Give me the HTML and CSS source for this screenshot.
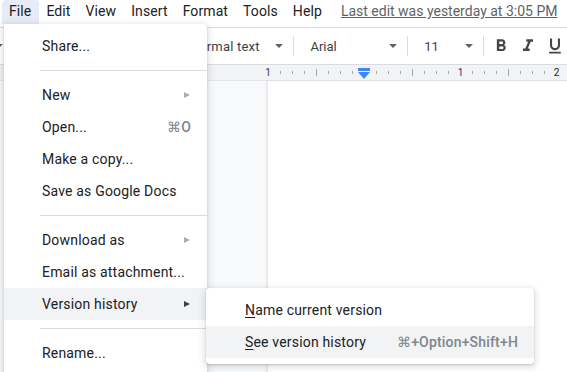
FILE: index.html
```html
<!DOCTYPE html>
<html>
<head>
<meta charset="utf-8">
<link rel="stylesheet" href="styles.css">
</head>
<body>
<div class="app">
  <div class="menubar">
    <span class="mb-item active">File</span>
    <span class="mb-item">Edit</span>
    <span class="mb-item">View</span>
    <span class="mb-item">Insert</span>
    <span class="mb-item">Format</span>
    <span class="mb-item">Tools</span>
    <span class="mb-item">Help</span>
    <span class="last-edit">Last edit was yesterday at 3:05 PM</span>
  </div>
  <div class="toolbar">
    <div class="tb-left"><i class="caret"></i></div>
    <div class="dd dd-style"><span>Normal text</span><i class="caret"></i></div>
    <div class="sep"></div>
    <div class="dd dd-font"><span>Arial</span><i class="caret"></i></div>
    <div class="sep"></div>
    <div class="dd dd-size"><span>11</span><i class="caret"></i></div>
    <div class="sep"></div>
    <div class="icon-btn"><svg viewBox="0 0 24 24" width="20" height="20"><path d="M15.6 10.79c.97-.67 1.650-1.77 1.65-2.79 0-2.26-1.75-4-4-4H7v14h7.04c2.09 0 3.71-1.7 3.71-3.79 0-1.52-.86-2.82-2.15-3.42zM10 6.5h3c.83 0 1.5.67 1.5 1.5s-.67 1.5-1.5 1.5h-3v-3zm3.5 9H10v-3h3.5c.83 0 1.5.67 1.5 1.5s-.67 1.5-1.5 1.5z"/></svg></div>
    <div class="icon-btn"><svg viewBox="0 0 24 24" width="20" height="20"><path d="M10 4v3h2.21l-3.420 8H6v3h8v-3h-2.21l3.42-8H18V4z"/></svg></div>
    <div class="icon-btn"><svg viewBox="0 0 24 24" width="20" height="20"><path d="M12 17c3.31 0 6-2.690 6-6V3h-2.5v8c0 1.93-1.57 3.5-3.5 3.5S8.5 12.93 8.5 11V3H6v8c0 3.31 2.69 6 6 6zm-7 2v2h14v-2H5z"/></svg></div>
  </div>
  <div class="ruler">
    <svg class="ruler-svg" width="567" height="15" viewBox="0 0 567 15">
      <g class="ticks">
        <rect x="280" y="6" width="1" height="3"/><rect x="292" y="6" width="1" height="3"/><rect x="304" y="6" width="1" height="3"/>
        <rect x="316" y="4" width="1" height="7"/>
        <rect x="328" y="6" width="1" height="3"/><rect x="340" y="6" width="1" height="3"/><rect x="352" y="6" width="1" height="3"/>
        <rect x="376" y="6" width="1" height="3"/><rect x="388" y="6" width="1" height="3"/><rect x="400" y="6" width="1" height="3"/>
        <rect x="412" y="4" width="1" height="7"/>
        <rect x="424" y="6" width="1" height="3"/><rect x="436" y="6" width="1" height="3"/><rect x="448" y="6" width="1" height="3"/>
        <rect x="472" y="6" width="1" height="3"/><rect x="484" y="6" width="1" height="3"/><rect x="496" y="6" width="1" height="3"/>
        <rect x="508" y="4" width="1" height="7"/>
        <rect x="520" y="6" width="1" height="3"/><rect x="532" y="6" width="1" height="3"/><rect x="544" y="6" width="1" height="3"/>
      </g>
      <g class="nums">
        <text x="268" y="11" class="num purple">1</text>
        <text x="460.5" y="11" class="num purple">1</text>
        <text x="556.5" y="11" class="num">2</text>
      </g>
      <g class="marker">
        <rect x="358" y="3" width="12" height="3"/>
        <polygon points="358,7 370,7 364,14"/>
      </g>
    </svg>
  </div>
  <div class="workspace">
    <div class="gutter"></div>
    <div class="page"></div>
  </div>

  <div class="menu file-menu">
    <div class="mi">Share...</div>
    <div class="divider"></div>
    <div class="mi">New<span class="arrow"></span></div>
    <div class="mi">Open...<span class="sc">⌘O</span></div>
    <div class="mi">Make a copy...</div>
    <div class="mi">Save as Google Docs</div>
    <div class="divider"></div>
    <div class="mi">Download as<span class="arrow"></span></div>
    <div class="mi">Email as attachment...</div>
    <div class="mi hl">Version history<span class="arrow dark"></span></div>
    <div class="divider"></div>
    <div class="mi">Rename...</div>
  </div>

  <div class="menu submenu">
    <div class="mi sub"><span><u>N</u>ame current version</span></div>
    <div class="mi sub hl"><span><u>S</u>ee version history</span><span class="sc">⌘+Option+Shift+H</span></div>
  </div>
</div>
</body>
</html>
```

FILE: styles.css
```css
* { box-sizing: border-box; }
html, body { margin: 0; padding: 0; }
body {
  width: 567px;
  height: 372px;
  overflow: hidden;
  font-family: Roboto, "Liberation Sans", Arial, sans-serif;
  color: #202124;
  background: #fff;
}
.app {
  position: relative;
  width: 567px;
  height: 372px;
  overflow: hidden;
  display: flex;
  flex-direction: column;
}

/* menubar */
.menubar {
  height: 28px;
  border-bottom: 1px solid #dadce0;
  display: flex;
  align-items: flex-start;
  padding-left: 2px;
  font-size: 14px;
  letter-spacing: 0.1px;
  flex-shrink: 0;
}
.mb-item {
  height: 24px;
  line-height: 23px;
  padding: 0 8px 0 7px;
  border-radius: 4px 4px 0 0;
  white-space: nowrap;
}
.mb-item.active { background: #e6ebf5; }
.last-edit {
  margin-left: 11px;
  line-height: 23px;
  color: #5f6368;
  text-decoration: underline;
  white-space: nowrap;
  letter-spacing: 0;
}

/* toolbar */
.toolbar {
  height: 37px;
  border-bottom: 1px solid #dadce0;
  display: flex;
  align-items: center;
  font-size: 13px;
  color: #3c4043;
  flex-shrink: 0;
}
.tb-left {
  width: 184px;
  display: flex;
  align-items: center;
}
.caret {
  display: inline-block;
  width: 0;
  height: 0;
  border-left: 4px solid transparent;
  border-right: 4px solid transparent;
  border-top: 4px solid #5f6368;
}
.tb-left .caret { margin-left: -5px; }
.dd {
  display: flex;
  align-items: center;
  height: 28px;
  padding-left: 6px;
}
.dd span { flex: 1; }
.dd .caret { margin-right: 6px; }
.dd-style { width: 106px; letter-spacing: 0.2px; }
.dd-font { width: 103px; margin-left: 6px; padding-left: 10px; }
.dd-size { width: 65px; margin-left: 6px; padding-left: 10px; }
.sep {
  width: 1px;
  height: 20px;
  background: #dadce0;
  margin-left: 4px;
}
.icon-btn {
  width: 24px;
  height: 24px;
  display: flex;
  align-items: center;
  justify-content: center;
  margin-left: 3px;
}
.sep + .icon-btn { margin-left: 5px; }
.icon-btn svg { fill: #444746; }

/* ruler */
.ruler {
  height: 16px;
  background: #f1f3f4;
  border-bottom: 1px solid #e3e5e8;
  flex-shrink: 0;
}
.ruler-svg { display: block; }
.ticks rect { fill: #a3a7ac; }
.num {
  font-family: Roboto, "Liberation Sans", sans-serif;
  font-size: 10px;
  fill: #202124;
  text-anchor: middle;
}
.num.purple { fill: #3b2a7a; }
.marker rect, .marker polygon { fill: #4285f4; }

/* workspace */
.workspace {
  flex: 1;
  display: flex;
  background: #f8f9fa;
}
.gutter { width: 267px; flex-shrink: 0; }
.page {
  flex: 1;
  background: #fff;
  border-left: 1px solid #e6e7e9;
  box-shadow: -1px 0 2px rgba(60,64,67,0.08);
}

/* menus */
.menu {
  position: absolute;
  background: #fff;
  padding: 6px 0;
  box-shadow: 0 2px 6px 2px rgba(60,64,67,0.15), 0 1px 2px rgba(60,64,67,0.2);
  font-size: 14px;
  letter-spacing: 0.18px;
  color: #202124;
}
.file-menu {
  left: 4px;
  top: 24px;
  width: 203px;
  height: 360px;
  border-radius: 0 4px 4px 4px;
}
.submenu {
  left: 206px;
  top: 288px;
  width: 328px;
  border-radius: 4px;
}
.mi {
  height: 32px;
  display: flex;
  align-items: center;
  padding-left: 38px;
  padding-right: 16px;
  white-space: nowrap;
}
.mi.sub { padding-left: 39px; }
.mi.hl { background: #f1f3f4; }
.mi u { text-decoration-thickness: 1px; text-underline-offset: 2px; }
.sc {
  margin-left: auto;
  color: #80868b;
  font-weight: 500;
}
.arrow {
  margin-left: auto;
  margin-right: 1px;
  width: 0;
  height: 0;
  border-top: 3.5px solid transparent;
  border-bottom: 3.5px solid transparent;
  border-left: 6px solid #a9adb1;
}
.arrow.dark { border-left-color: #3c4043; }
.divider {
  margin: 8px 0 8px 36px;
  border-top: 1px solid #dadce0;
  height: 0;
}
```
